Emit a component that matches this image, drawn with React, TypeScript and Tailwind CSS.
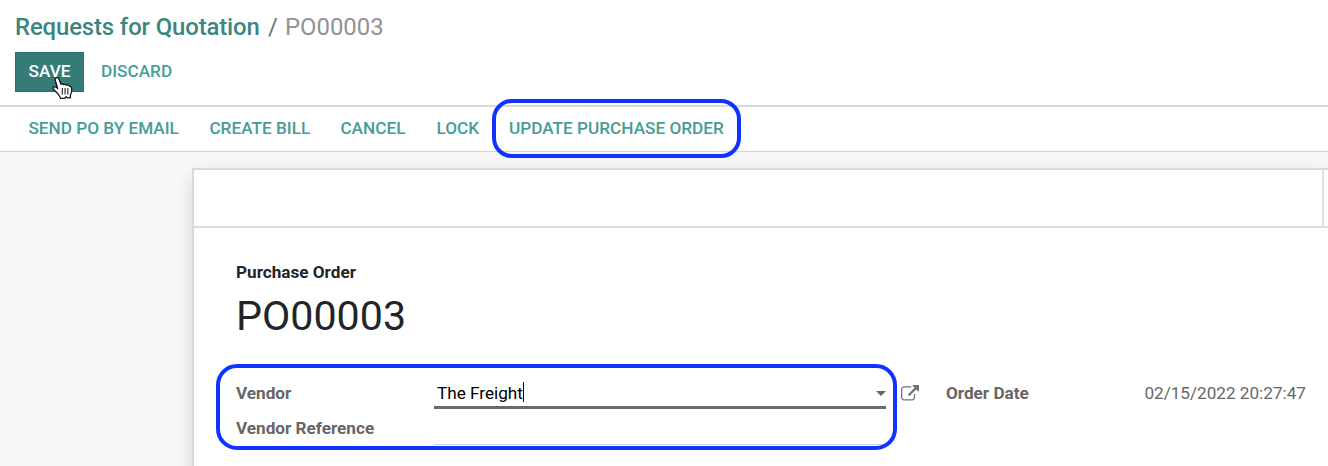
const actions = [
  { label: 'SEND PO BY EMAIL', width: 'w-[181px]' },
  { label: 'CREATE BILL', width: 'w-[131px]' },
  { label: 'CANCEL', width: 'w-[96px]' },
  { label: 'LOCK', width: 'w-[72.600px]' },
];

function HandCursor() {
  return (
    <svg className="absolute left-[36px] top-[23px] z-10 h-[24px] w-[22px]" viewBox="0 0 22 24" aria-hidden="true">
      <path
        d="M4.200 1.800C5.500 1.200 6.500 2 7 3.200L9 8.300C9.900 7.700 11 7.900 11.600 8.700C12.600 8 13.800 8.200 14.500 9.200C15.700 8.700 17.200 9 17.700 10.300C18.700 10.200 19.400 10.700 19.600 12C20 15 19.500 17 18.400 19.300V21.800H15.600L14.200 20.700L12.800 22.300H8.600C8.200 20.500 6.500 18.800 5.200 17L1.900 13.800C.8 12.600 1.100 11.300 2.200 10.900C3.500 10.500 4.700 11.400 5.700 12.500L3.200 4.200C2.900 3.200 3.300 2.200 4.200 1.800Z"
        fill="#fff"
        stroke="#151515"
        strokeWidth="1.3"
        strokeLinejoin="round"
      />
      <path d="M10.300 12v6.500M13.100 12v6.500M15.900 12v6.500" fill="none" stroke="#222" strokeWidth="1.100" />
    </svg>
  );
}

function ExternalLink() {
  return (
    <svg className="h-[18px] w-[18px]" viewBox="0 0 1792 1792" fill="#737477" aria-hidden="true">
      <path d="M1408 928v320q0 119-84.500 203.500t-203.500 84.500h-832q-119 0-203.500-84.500t-84.500-203.500v-832q0-119 84.500-203.500t203.500-84.500h704q14 0 23 9t9 23v64q0 14-9 23t-23 9h-704q-66 0-113 47t-47 113v832q0 66 47 113t113 47h832q66 0 113-47t47-113v-320q0-14 9-23t23-9h64q14 0 23 9t9 23zm384-864v512q0 26-19 45t-45 19-45-19l-176-176-652 652q-10 10-23 10t-23-10l-114-114q-10-10-10-23t10-23l652-652-176-176q-19-19-19-45t19-45 45-19h512q26 0 45 19t19 45z" />
    </svg>
  );
}

export default function App() {
  return (
    <div className="relative flex h-[466px] w-[1328px] flex-col overflow-hidden bg-[#f8f8f8] font-['Roboto',sans-serif] whitespace-nowrap">
      <header className="h-[107px] shrink-0 border-b-2 border-[#d8d8d8] bg-white pl-[15px] pt-[11px]">
        <div className="flex h-8 items-center text-[23.900px] leading-8">
          <a className="w-[253px] font-medium tracking-[-0.12px] text-[#3c8681]">Requests for Quotation</a>
          <span className="w-[17px] text-[#6c757d]">/</span>
          <span className="text-[#929292]">PO00003</span>
        </div>
        <div className="mt-[9px] flex items-center text-[17.200px] font-medium">
          <button className="relative h-10 w-[69px] border border-[#2f716d] bg-[#357b77] text-white">
            SAVE
            <HandCursor />
          </button>
          <button className="ml-[17px] text-[#45a09a]">DISCARD</button>
        </div>
      </header>

      <nav className="flex h-[45px] shrink-0 items-center border-b border-[#d3d4d7] bg-white pl-[28.400px] text-[17.200px] font-medium text-[#469c97]">
        {actions.map((a) => (
          <button key={a.label} className={`${a.width} text-left`}>{a.label}</button>
        ))}
        <button>UPDATE PURCHASE ORDER</button>
      </nav>

      <main className="min-h-0 flex-1 pl-[192px] pt-4">
        <section className="h-[320px] border-l-2 border-t-2 border-[#d7d9dc] bg-white shadow-[0_5px_20px_-5px_rgba(0,0,0,0.24)]">
          <div className="flex h-[58px] justify-end border-b-2 border-[#dadcde]">
            <div className="w-[6px] border-l-2 border-[#e0e1e3]" />
          </div>
          <div className="pl-[42px]">
            <div className="pt-[34px] text-[17.150px] font-bold leading-5 text-[#212529]">Purchase Order</div>
            <h1 className="mt-[9px] text-[41.200px] leading-[50px] text-[#212529]">PO00003</h1>
            <div className="mt-[40px] flex text-[17.150px] leading-6 text-[#666]">
              <div className="w-[198px] font-bold">
                <div>Vendor</div>
                <div className="mt-[11px]">Vendor Reference</div>
              </div>
              <div className="w-[452px]">
                <div className="flex h-[28px] items-start justify-between border-b-[3px] border-[#6a6a6a] pl-[3px] text-black">
                  <span className="flex">
                    The Freight<span className="mt-px h-5 w-px bg-black" />
                  </span>
                  <svg className="mt-[10px] h-[5px] w-[10px]" viewBox="0 0 10 5" aria-hidden="true">
                    <path d="M0 0h10L5 5z" fill="#666" />
                  </svg>
                </div>
                <div className="h-[36px] border-b border-[#ced4da]" />
              </div>
              <div className="ml-[15px] mt-[4px] w-[45px]"><ExternalLink /></div>
              <div className="w-[198.400px] font-bold">Order Date</div>
              <div>02/15/2022 20:27:47</div>
            </div>
          </div>
        </section>
      </main>

      <div className="absolute left-[492px] top-[99px] h-[59px] w-[249px] rounded-[20px] border-4 border-[#1133ff]" />
      <div className="absolute left-[216px] top-[364px] h-[86px] w-[681px] rounded-[21px] border-4 border-[#1133ff]" />
    </div>
  );
}
